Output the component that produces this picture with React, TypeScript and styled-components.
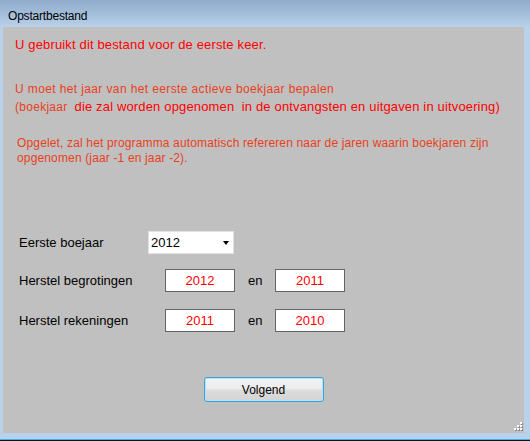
import React from "react";
import styled, { createGlobalStyle } from "styled-components";

const GlobalStyle = createGlobalStyle`
  html, body { margin: 0; padding: 0; background: #b9d1ea; }
  * { box-sizing: border-box; }
`;

const Window = styled.div`
  width: 530px;
  height: 441px;
  display: flex;
  flex-direction: column;
  background: #b9d1ea;
  border-bottom: 1px solid #101418;
  font-family: "Liberation Sans", Arial, sans-serif;
`;

const TitleBar = styled.div`
  height: 27px;
  flex: none;
  padding: 8px 0 0 8px;
  background: linear-gradient(#8eabca, #b9d1ea);
  font-size: 12px;
  line-height: 16px;
  letter-spacing: -0.2px;
  color: #000;
`;

const Frame = styled.div`
  flex: 1;
  display: flex;
  padding: 0 6px 6px 3px;
  border-bottom: 1px solid #39b4e8;
`;

const Content = styled.div`
  flex: 1;
  position: relative;
  background: #c0c0c0;
  display: flex;
  flex-direction: column;
  padding-left: 12px;
`;

const Line = styled.div<{ $color: string; $size: number; $ls: number; $lh: number; $top: number; $indent?: number }>`
  color: ${(p) => p.$color};
  font-size: ${(p) => p.$size}px;
  letter-spacing: ${(p) => p.$ls}px;
  line-height: ${(p) => p.$lh}px;
  margin-top: ${(p) => p.$top}px;
  padding-left: ${(p) => p.$indent ?? 0}px;
  white-space: pre;
`;

const Part = styled.span<{ $color: string; $size?: number; $gap?: number; $ls?: number }>`
  color: ${(p) => p.$color};
  ${(p) => (p.$size ? `font-size: ${p.$size}px;` : "")}
  ${(p) => (p.$ls !== undefined ? `letter-spacing: ${p.$ls}px;` : "")}
  margin-left: ${(p) => p.$gap ?? 0}px;
`;

const FormRow = styled.div<{ $top: number }>`
  display: flex;
  align-items: center;
  height: 23px;
  margin-top: ${(p) => p.$top}px;
  padding-left: 4px;
`;

const Label = styled.div<{ $w: number }>`
  width: ${(p) => p.$w}px;
  font-size: 13px;
  color: #000;
`;

const Select = styled.div`
  width: 86px;
  height: 23px;
  background: #fff;
  border: 1px solid #e2e2e2;
  display: flex;
  align-items: center;
  justify-content: space-between;
  padding: 0 4px 0 2px;
  font-size: 13px;
  color: #000;
`;

const Arrow = styled.span`
  width: 0;
  height: 0;
  border-left: 3.5px solid transparent;
  border-right: 3.5px solid transparent;
  border-top: 4px solid #000;
`;

const Field = styled.div`
  width: 70px;
  height: 23px;
  background: #fff;
  border: 1px solid #646464;
  display: flex;
  align-items: center;
  justify-content: center;
  font-size: 13px;
  color: #ff0000;
`;

const En = styled.div`
  width: 40px;
  padding-left: 13px;
  font-size: 13px;
  color: #000;
`;

const Button = styled.button`
  align-self: center;
  margin: 45px 0 0 -12px;
  width: 120px;
  height: 25px;
  border: 1px solid #3ca3d8;
  border-radius: 3px;
  background: linear-gradient(#f3f3f3 0%, #ececec 45%, #dcdcdc 55%, #d4d4d4 100%);
  box-shadow: inset 0 0 0 1px #b6e2f6;
  font-family: "Liberation Sans", Arial, sans-serif;
  font-size: 12px;
  color: #000;
  padding: 0;
`;

const Grip = styled.svg`
  position: absolute;
  right: 1px;
  bottom: 1px;
`;

export default function App() {
  const orange = "#e8401c";
  return (
    <>
      <GlobalStyle />
      <Window>
        <TitleBar>Opstartbestand</TitleBar>
        <Frame>
          <Content>
            <Line $color="#ff0000" $size={13} $ls={0.15} $lh={16} $top={10}>
              U gebruikt dit bestand voor de eerste keer.
            </Line>
            <Line $color={orange} $size={12} $ls={0.38} $lh={17} $top={28}>
              U moet het jaar van het eerste actieve boekjaar bepalen
            </Line>
            <Line $color="#ff0000" $size={13} $ls={0.15} $lh={17} $top={0}>
              <Part $color={orange} $size={12} $ls={0.28}>(boekjaar</Part>
              <Part $color="#ff0000" $gap={7}>die zal worden opgenomen  in de ontvangsten en uitgaven in uitvoering)</Part>
              <Part $color="#d8a8a8">.</Part>
            </Line>
            <Line $color={orange} $size={12} $ls={0.15} $lh={15} $top={20} $indent={2}>
              Opgelet, zal het programma automatisch refereren naar de jaren waarin boekjaren zijn
            </Line>
            <Line $color={orange} $size={12} $ls={0.15} $lh={15} $top={0} $indent={2}>
              opgenomen (jaar -1 en jaar -2).
            </Line>
            <FormRow $top={65}>
              <Label $w={129}>Eerste boejaar</Label>
              <Select>
                <span>2012</span>
                <Arrow />
              </Select>
            </FormRow>
            <FormRow $top={15}>
              <Label $w={146}>Herstel begrotingen</Label>
              <Field>2012</Field>
              <En>en</En>
              <Field>2011</Field>
            </FormRow>
            <FormRow $top={17}>
              <Label $w={146}>Herstel rekeningen</Label>
              <Field>2011</Field>
              <En>en</En>
              <Field>2010</Field>
            </FormRow>
            <Button>Volgend</Button>
            <Grip width="10" height="10" viewBox="0 0 10 10">
              {[
                [7, 0],
                [4, 3],
                [7, 3],
                [1, 6],
                [4, 6],
                [7, 6],
              ].map(([x, y], i) => (
                <g key={i}>
                  <rect x={x + 1} y={y + 1} width="2" height="2" fill="#8a8a8a" />
                  <rect x={x} y={y} width="2" height="2" fill="#ffffff" />
                </g>
              ))}
            </Grip>
          </Content>
        </Frame>
      </Window>
    </>
  );
}
